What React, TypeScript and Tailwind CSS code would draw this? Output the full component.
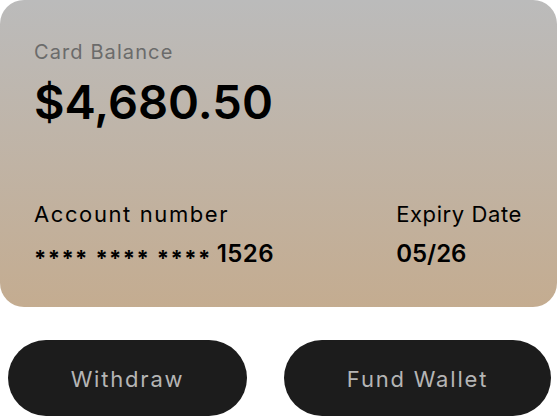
import React from 'react';

const font = { fontFamily: 'Inter, "Noto Sans", sans-serif' };

const App: React.FC = () => {
  return (
    <div className="w-[558px] h-[416px] bg-white overflow-hidden" style={font}>
      <div className="w-[557px] h-[307px] rounded-[24px] bg-linear-to-b from-[#bbbbbb] to-[#c4ac90] px-[34px] pt-[42px]">
        <p className="text-[20px] leading-none tracking-[1.1px] text-[#6b6b6b]">Card Balance</p>
        <p className="mt-[16px] text-[47px] leading-none font-semibold text-black">$4,680.50</p>

        <div className="mt-[78px] flex justify-between">
          <div>
            <p className="text-[22px] leading-none tracking-[1.6px] text-black">Account number</p>
            <p className="mt-[17px] text-[24px] leading-none font-semibold text-black flex items-center">
              <span className="tracking-[1.4px] translate-y-[4px] text-[22px] font-bold">**** **** ****</span>
              <span className="ml-[5px] tracking-[0.5px]">1526</span>
            </p>
          </div>
          <div className="pr-[1px]">
            <p className="text-[22px] leading-none tracking-[0.6px] text-black">Expiry Date</p>
            <p className="mt-[17px] text-[24px] leading-none font-semibold text-black">05/26</p>
          </div>
        </div>
      </div>

      <div className="mt-[33px] flex pl-[8px] gap-[37px]">
        <button className="w-[239px] h-[76px] rounded-full bg-[#1c1c1c] text-[#b5b5b5] text-[22px] tracking-[1.8px] pt-[2px]">
          Withdraw
        </button>
        <button className="w-[267px] h-[76px] rounded-full bg-[#1c1c1c] text-[#b5b5b5] text-[22px] tracking-[1.8px] pt-[2px]">
          Fund Wallet
        </button>
      </div>
    </div>
  );
};

export default App;
